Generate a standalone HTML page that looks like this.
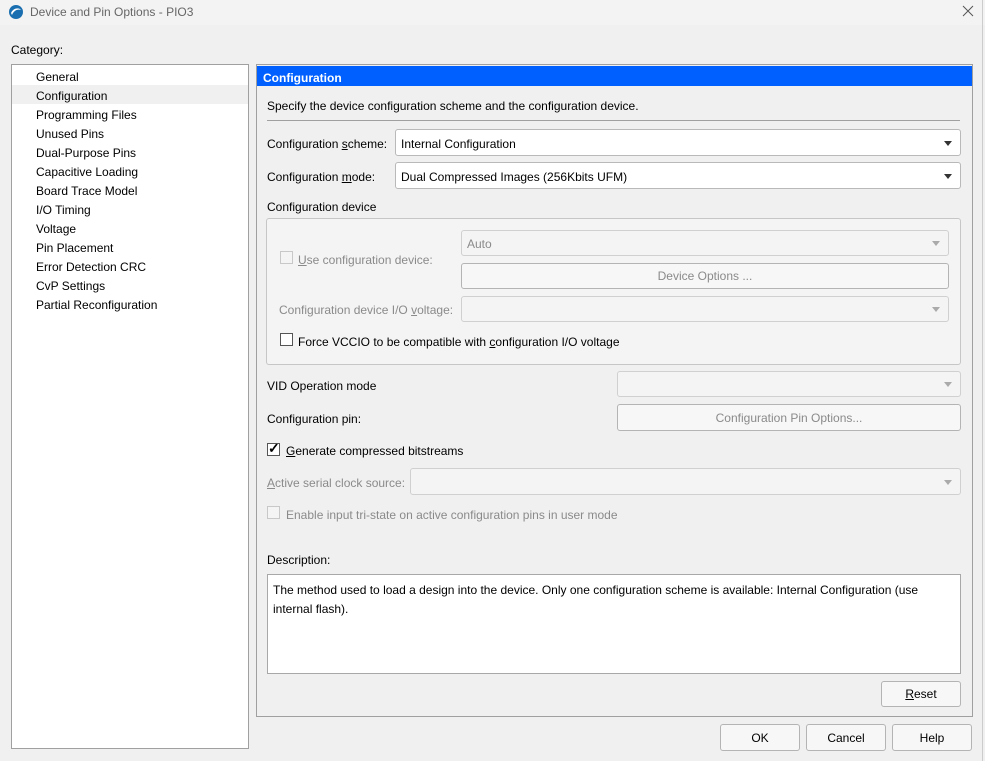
<!DOCTYPE html>
<html><head><meta charset="utf-8"><style>
*{box-sizing:border-box;margin:0;padding:0}
body{width:985px;height:761px;background:#f0f0f0;font-family:"Liberation Sans",sans-serif;font-size:12px;color:#000;position:relative;overflow:hidden}
.a{position:absolute;white-space:nowrap}
.dis{color:#8a8a8a}
.box{position:absolute;border:1px solid #c6c6c6;border-radius:3px;background:#f4f4f4}
.dd{position:absolute;border:1px solid #b9b9b9;border-radius:3px;background:#fff}
.dd.d{background:#f4f4f4;border-color:#d0d0d0}
.arr{position:absolute;right:8px;top:50%;margin-top:-2px;width:0;height:0;border-left:4px solid transparent;border-right:4px solid transparent;border-top:5px solid #333}
.dd.d .arr{border-top-color:#aaa}
.btn{position:absolute;border:1px solid #b4b4b4;border-radius:3px;background:#f7f7f7;text-align:center}
.cb{position:absolute;width:13px;height:13px;border:1px solid #333;background:#fff}
.cb.d{border-color:#c8c8c8;background:#f4f4f4}
u{text-decoration:underline}
</style></head><body>
<div class="a" style="left:0;top:0;width:985px;height:25px;background:#f3f3f3"></div>
<svg class="a" style="left:8px;top:4px" width="16" height="16" viewBox="0 0 16 16"><circle cx="8" cy="8" r="7" fill="#1a6fb0"/><path d="M3 9 C5 4 11 3 13 6 C10 5 6 6 4 11Z" fill="#fff"/></svg>
<div class="a" style="left:30px;top:5px;color:#666;font-size:12px">Device and Pin Options - PIO3</div>
<svg class="a" style="left:962px;top:5px" width="12" height="12"><path d="M1 1L11 11M11 1L1 11" stroke="#555" stroke-width="1"/></svg>
<div class="a" style="left:982px;top:0;width:1px;height:761px;background:#ccc"></div>

<div class="a" style="left:11px;top:43px">Category:</div>
<div class="a" style="left:11px;top:64px;width:238px;height:685px;background:#fff;border:1px solid #a0a0a0"></div>
<div class="a" style="left:12px;top:85px;width:236px;height:19px;background:#f0f0f0"></div>
<div class="a" style="left:36px;top:68px;line-height:19px">General<br>Configuration<br>Programming Files<br>Unused Pins<br>Dual-Purpose Pins<br>Capacitive Loading<br>Board Trace Model<br>I/O Timing<br>Voltage<br>Pin Placement<br>Error Detection CRC<br>CvP Settings<br>Partial Reconfiguration</div>

<div class="a" style="left:256px;top:64px;width:717px;height:653px;border:1px solid #a0a0a0"></div>
<div class="a" style="left:257px;top:66px;width:715px;height:20px;background:#0060ff;color:#fff;font-weight:bold;padding:5px 0 0 6px;font-size:12px">Configuration</div>
<div class="a" style="left:267px;top:99px">Specify the device configuration scheme and the configuration device.</div>
<div class="a" style="left:267px;top:120px;width:693px;height:1px;background:#a0a0a0"></div>

<div class="a" style="left:267px;top:137px">Configuration <u>s</u>cheme:</div>
<div class="dd" style="left:395px;top:129px;width:566px;height:27px"><span class="a" style="left:5px;top:7px">Internal Configuration</span><div class="arr"></div></div>
<div class="a" style="left:267px;top:170px">Configuration <u>m</u>ode:</div>
<div class="dd" style="left:395px;top:162px;width:566px;height:27px"><span class="a" style="left:5px;top:7px">Dual Compressed Images (256Kbits UFM)</span><div class="arr"></div></div>

<div class="a" style="left:267px;top:200px">Configuration device</div>
<div class="box" style="left:266px;top:218px;width:695px;height:147px"></div>
<div class="cb d" style="left:280px;top:251px"></div>
<div class="a dis" style="left:298px;top:253px"><u>U</u>se configuration device:</div>
<div class="dd d" style="left:461px;top:230px;width:488px;height:26px"><span class="a dis" style="left:5px;top:6px">Auto</span><div class="arr"></div></div>
<div class="btn dis" style="left:461px;top:263px;width:488px;height:26px;line-height:25px">Device Options ...</div>
<div class="a dis" style="left:279px;top:303px">Configuration device I/O <u>v</u>oltage:</div>
<div class="dd d" style="left:461px;top:296px;width:488px;height:26px"><div class="arr"></div></div>
<div class="cb" style="left:280px;top:333px;border-color:#555"></div>
<div class="a" style="left:298px;top:335px">Force VCCIO to be compatible with <u>c</u>onfiguration I/O voltage</div>

<div class="a" style="left:267px;top:379px">VID Operation mode</div>
<div class="dd d" style="left:617px;top:371px;width:344px;height:26px"><div class="arr"></div></div>
<div class="a" style="left:267px;top:412px">Configuration pin:</div>
<div class="btn dis" style="left:617px;top:404px;width:344px;height:27px;line-height:26px">Configuration Pin Options...</div>
<div class="cb" style="left:267px;top:443px;border-color:#555"></div>
<div class="a" style="left:268px;top:440px;font-size:14px;font-weight:bold">✓</div>
<div class="a" style="left:286px;top:444px"><u>G</u>enerate compressed bitstreams</div>
<div class="a dis" style="left:267px;top:476px"><u>A</u>ctive serial clock source:</div>
<div class="dd d" style="left:410px;top:468px;width:551px;height:27px"><div class="arr"></div></div>
<div class="cb d" style="left:267px;top:506px"></div>
<div class="a dis" style="left:286px;top:508px">Enable input tri-state on active configuration pins in user mode</div>

<div class="a" style="left:267px;top:553px">Description:</div>
<div class="a" style="left:267px;top:574px;width:694px;height:100px;background:#fff;border:1px solid #a8a8a8;padding:6px 5px;white-space:normal;line-height:19px">The method used to load a design into the device. Only one configuration scheme is available: Internal Configuration (use internal flash).</div>
<div class="btn" style="left:881px;top:681px;width:80px;height:26px;line-height:25px"><u>R</u>eset</div>

<div class="btn" style="left:720px;top:724px;width:80px;height:27px;line-height:26px">OK</div>
<div class="btn" style="left:806px;top:724px;width:80px;height:27px;line-height:26px">Cancel</div>
<div class="btn" style="left:892px;top:724px;width:80px;height:27px;line-height:26px">Help</div>
</body></html>
